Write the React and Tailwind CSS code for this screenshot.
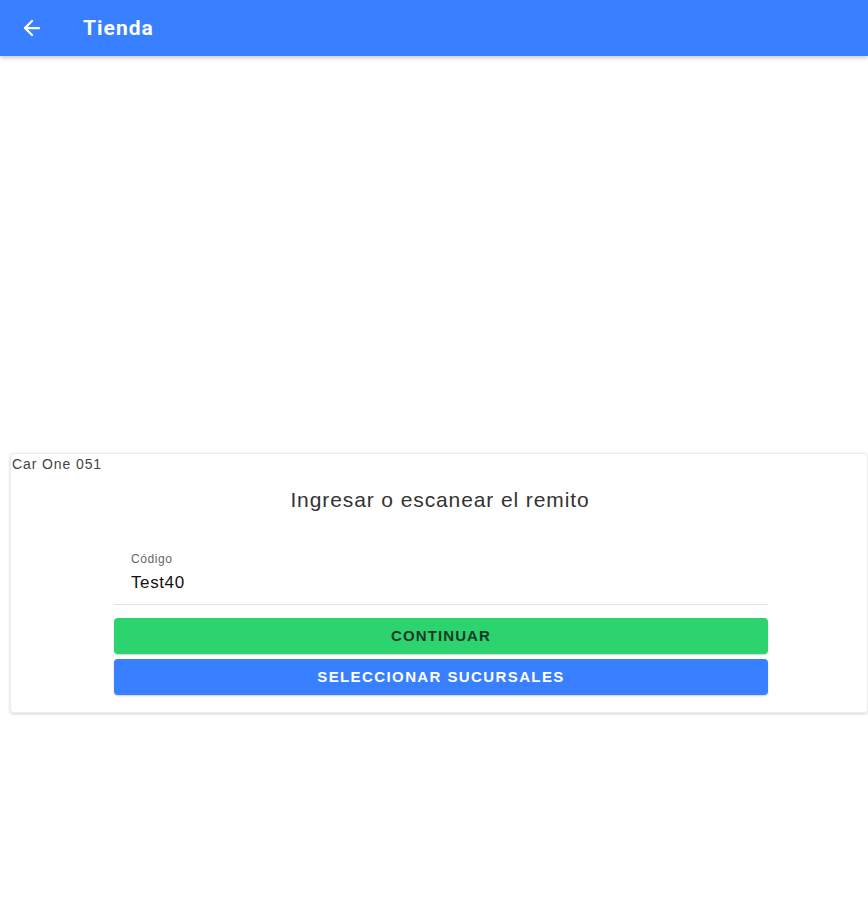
import { ArrowLeft } from 'lucide-react';

export default function App() {
  return (
    <div className="min-h-[900px] bg-white font-['Liberation_Sans',Arial,sans-serif]">
      {/* HEADER */}
      <header className="h-14 bg-[#3880ff] flex items-center shadow-[0_2px_4px_rgba(0,0,0,0.2)] relative z-10">
        <button className="ml-[20px] text-white">
          <ArrowLeft size={24} strokeWidth={2.25} />
        </button>
        <h1 className="ml-[39px] mt-[1px] text-white text-[21px] font-bold tracking-[1px] font-['Roboto',sans-serif]">Tienda</h1>
      </header>

      {/* CARD */}
      <div className="ml-[10px] mt-[397px] border border-[#ececec] rounded-sm shadow-[0_1px_3px_rgba(0,0,0,0.18)] pt-[2px] pb-[17px]">
        <div className="pl-[1px] text-[14px] leading-[16px] tracking-[0.9px] text-[#444]">Car One 051</div>
        <h2 className="mt-[15px] ml-[2px] text-center text-[21px] leading-[26px] tracking-[0.9px] text-[#333]">Ingresar o escanear el remito</h2>

        <div className="ml-[103px] w-[654px] mt-[39px]">
          <div className="border-b border-[#e3e3e3] pl-[17px] pb-[11px]">
            <div className="text-[12px] leading-[14px] tracking-[0.6px] text-[#666]">Código</div>
            <div className="mt-[6px] text-[17px] leading-[21px] tracking-[0.6px] text-[#111]">Test40</div>
          </div>

          <button className="mt-[13px] w-full h-[36px] rounded bg-[#2dd36f] text-[15px] tracking-[1.1px] font-bold text-[#1b3a26] shadow-[0_1px_2px_rgba(0,0,0,0.2)]">
            CONTINUAR
          </button>
          <button className="mt-[5px] w-full h-[36px] rounded bg-[#3880ff] text-[15px] tracking-[1.4px] font-bold text-white shadow-[0_1px_2px_rgba(0,0,0,0.2)]">
            SELECCIONAR SUCURSALES
          </button>
        </div>
      </div>
    </div>
  );
}
